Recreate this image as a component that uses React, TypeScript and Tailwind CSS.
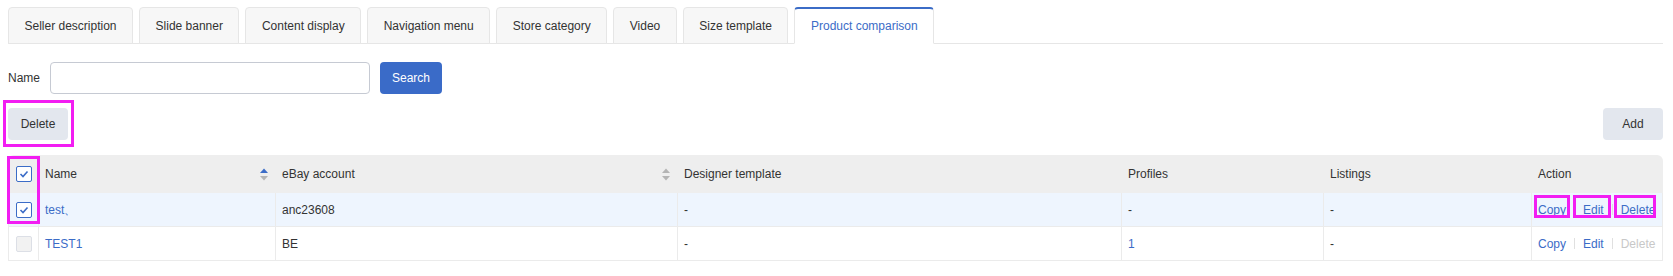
import React from "react";

const tabs = [
  "Seller description",
  "Slide banner",
  "Content display",
  "Navigation menu",
  "Store category",
  "Video",
  "Size template",
  "Product comparison",
];

const cols = "grid grid-cols-[31px_237px_402px_444px_202px_208px_131px]";

function Checkbox({ checked }: { checked?: boolean }) {
  if (checked) {
    return (
      <span className="flex h-4 w-4 items-center justify-center rounded-[2px] border border-[#3b6cc7] bg-white">
        <svg width="10" height="8" viewBox="0 0 10 8">
          <polyline points="1.5,4 4,6.5 8.5,1.5" fill="none" stroke="#3b6cc7" strokeWidth="1.6" />
        </svg>
      </span>
    );
  }
  return <span className="h-4 w-4 rounded-[2px] border border-[#dcdfe6] bg-[#f2f2f2]" />;
}

function SortIcon({ active }: { active?: boolean }) {
  return (
    <svg width="8" height="13" viewBox="0 0 8 13">
      <polygon points="0,5 4,0.5 8,5" fill={active ? "#3b6cc7" : "#b4b4b4"} />
      <polygon points="0,8 4,12.5 8,8" fill="#b4b4b4" />
    </svg>
  );
}

function Mark({ className }: { className: string }) {
  return <div className={`pointer-events-none absolute border-[3px] border-[#f21df2] ${className}`} />;
}

const cell = "flex items-center px-1.5 h-[34px] border-b border-r border-[#ebebeb]";

function Actions({ canDelete }: { canDelete: boolean }) {
  return (
    <div className="flex items-center text-[#3b6cc7]">
      <span>Copy</span>
      <span className="mx-2 h-[11px] w-px bg-[#e0e0e0]" />
      <span>Edit</span>
      <span className="mx-2 h-[11px] w-px bg-[#e0e0e0]" />
      <span className={canDelete ? "" : "text-[#c8c8c8]"}>Delete</span>
    </div>
  );
}

export default function App() {
  return (
    <div className="relative min-h-[276px] bg-white pl-2 pr-[10px] pt-[7px] font-['Liberation_Sans',Arial,sans-serif] text-xs text-[#333]">
      <div className="flex gap-1.5 border-b border-[#e6e6e6]">
        {tabs.map((t, i) => {
          const active = i === tabs.length - 1;
          return (
            <div
              key={t}
              className={
                active
                  ? "-mb-px flex h-[37px] items-center rounded-t border border-[#e6e6e6] border-t-2 border-t-[#3b6cc7] border-b-white bg-white px-[15.5px] text-[#3b6cc7]"
                  : "-mb-px flex h-[37px] items-center rounded-t border border-[#e6e6e6] bg-[#f7f7f7] px-[15.5px]"
              }
            >
              {t}
            </div>
          );
        })}
      </div>

      <div className="mt-[18px] flex items-center">
        <span>Name</span>
        <input className="ml-2.5 h-8 w-80 rounded border border-[#c6cad3] bg-white px-2 outline-none" />
        <button className="ml-2.5 h-8 min-w-[60px] rounded bg-[#3a6bc8] px-3 text-white">Search</button>
      </div>

      <div className="mt-[14px] flex items-center justify-between">
        <button className="h-8 min-w-[60px] rounded bg-[#e3e7ee] px-3">Delete</button>
        <button className="h-8 min-w-[60px] rounded bg-[#e3e7ee] px-3">Add</button>
      </div>

      <div className="mt-[15px]">
        <div className={`${cols} h-[38px] rounded-t-md bg-[#eeeeee]`}>
          <div className="flex items-center justify-center">
            <Checkbox checked />
          </div>
          <div className="flex items-center justify-between pl-1.5 pr-2">
            <span>Name</span>
            <SortIcon active />
          </div>
          <div className="flex items-center justify-between pl-1.5 pr-2">
            <span>eBay account</span>
            <SortIcon />
          </div>
          <div className="flex items-center px-1.5">Designer template</div>
          <div className="flex items-center px-1.5">Profiles</div>
          <div className="flex items-center px-1.5">Listings</div>
          <div className="flex items-center px-1.5">Action</div>
        </div>

        <div className={`${cols} bg-[#eef5fe]`}>
          <div className={`${cell} justify-center border-l`}>
            <Checkbox checked />
          </div>
          <div className={`${cell} text-[#3b6cc7]`}>test、</div>
          <div className={cell}>anc23608</div>
          <div className={cell}>-</div>
          <div className={cell}>-</div>
          <div className={cell}>-</div>
          <div className={cell}>
            <Actions canDelete />
          </div>
        </div>

        <div className={`${cols} bg-white`}>
          <div className={`${cell} justify-center border-l`}>
            <Checkbox />
          </div>
          <div className={`${cell} text-[#3b6cc7]`}>TEST1</div>
          <div className={cell}>BE</div>
          <div className={cell}>-</div>
          <div className={`${cell} text-[#3b6cc7]`}>1</div>
          <div className={cell}>-</div>
          <div className={cell}>
            <Actions canDelete={false} />
          </div>
        </div>
      </div>

      <Mark className="left-[3px] top-[100px] h-[47px] w-[71px]" />
      <Mark className="left-[7px] top-[156px] h-[68px] w-[33px]" />
      <Mark className="left-[1534px] top-[195px] h-[23px] w-[36px]" />
      <Mark className="left-[1573px] top-[195px] h-[23px] w-[38px]" />
      <Mark className="left-[1614px] top-[195px] h-[23px] w-[42px]" />
    </div>
  );
}
